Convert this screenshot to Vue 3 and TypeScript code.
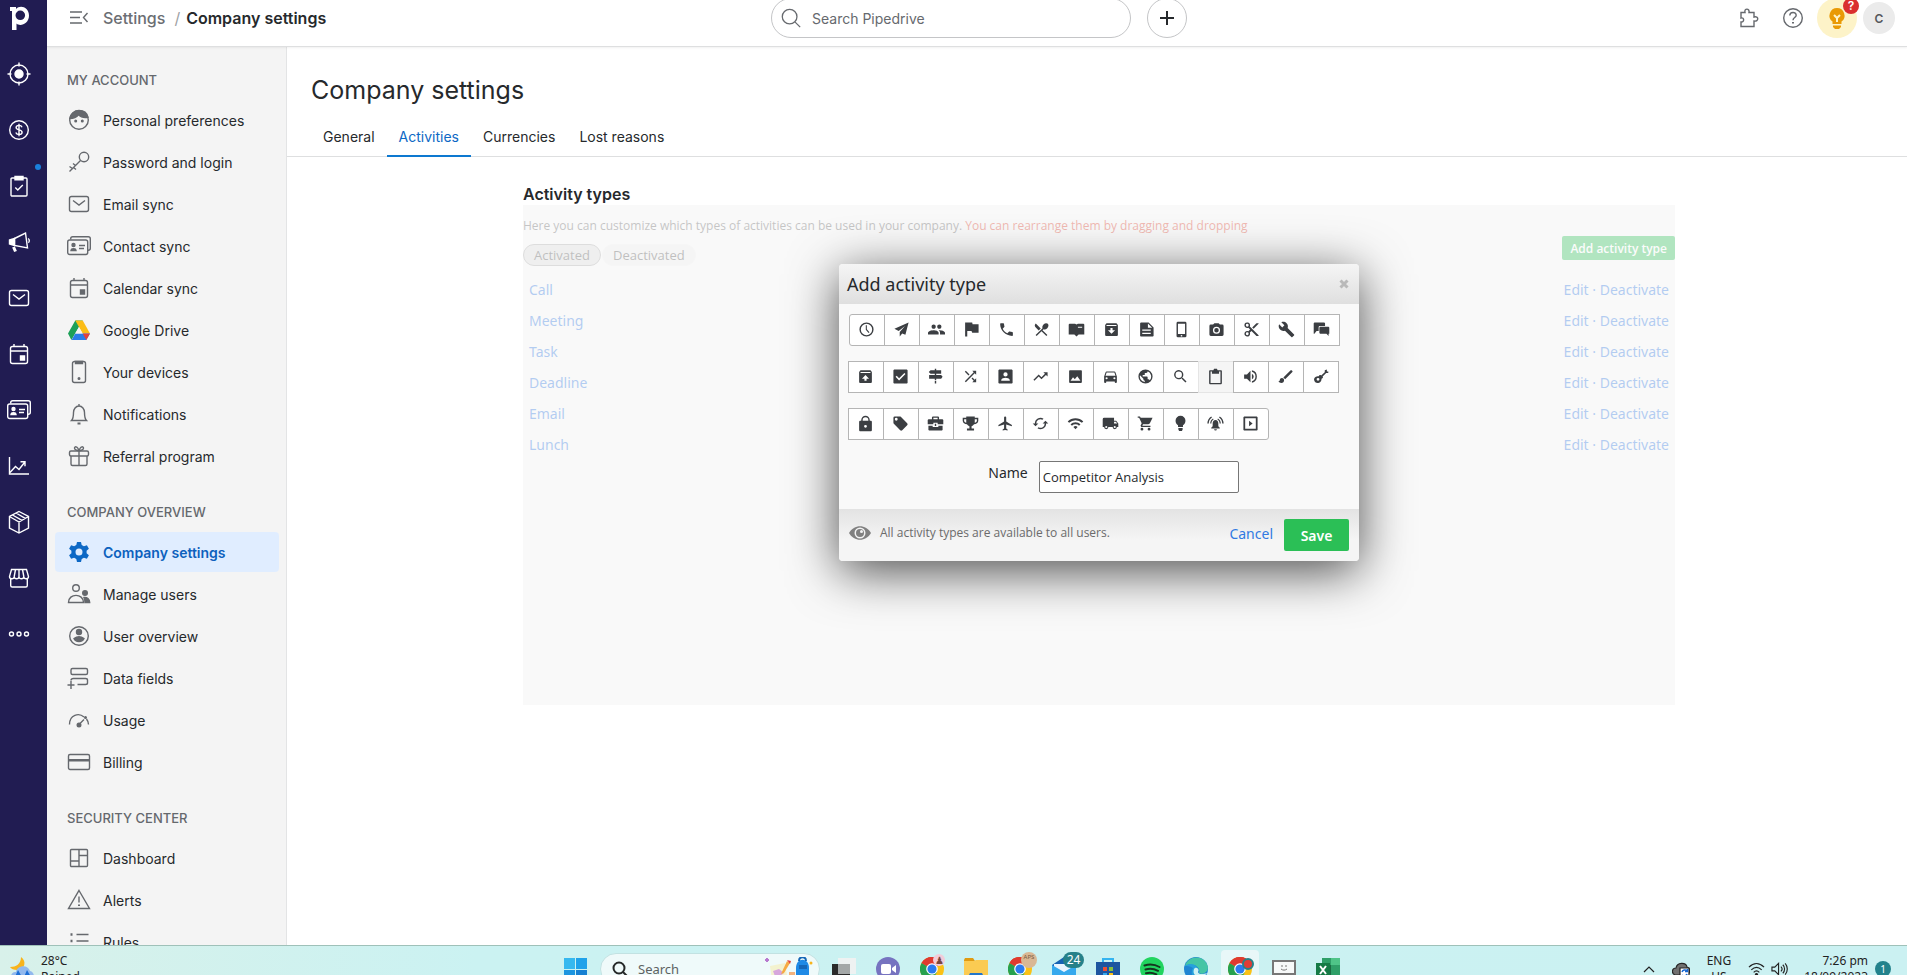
<script setup lang="ts">
import { ref } from 'vue'

interface NavItem { label: string; icon: string; active?: boolean }
interface NavSection { title: string; items: NavItem[] }

const outline: Record<string, string> = {
  target: '<circle cx="12" cy="12" r="9"/><circle cx="12" cy="12" r="4" class="solid"/><path d="M12 .5v4M12 19.500v4M.5 12h4M19.500 12h4"/>',
  dollar: '<circle cx="12" cy="12" r="9.300"/><path d="M15 9.200c-.4-1.200-1.500-1.800-3-1.800s-2.900.7-2.900 2.200c0 3.200 6 1.400 6 4.600 0 1.600-1.500 2.300-3.100 2.300s-2.800-.7-3.200-2M12 5.700v12.600"/>',
  tasks: '<rect x="4" y="4" width="16" height="18" rx="1"/><path d="M8 2.500h8v3.200H8z" class="solid"/><path d="M8.300 13.500l2.500 2.500 5-5"/>',
  megaphone: '<path d="M2.500 10l5-1.500v7l-5-1.500z" class="solid"/><path d="M7.500 8.500L18.500 3l2 15-13-2.500zM21 8.500c1.500.8 1.800 3 .4 4.200" /><path d="M6.500 17l2 4.500" stroke-width="3"/>',
  mail: '<rect x="2.500" y="4.500" width="19" height="15" rx="2"/><path d="M6 8.500l6 4.500 6-4.500"/>',
  calendar: '<rect x="3.500" y="4.500" width="17" height="17" rx="2"/><path d="M3.500 9h17M7 2v3M17 2v3"/><path d="M13.500 14h4v4h-4z" class="solid"/>',
  contacts: '<path d="M3.700 5.500v-.8c0-1.200.8-2 2-2h15.600c1.200 0 2 .8 2 2v9.600c0 1.200-.8 2-2 2h-.5"/><rect x=".7" y="6" width="20" height="14.500" rx="2"/><circle cx="6.500" cy="11" r="1.500" class="solid"/><path d="M4 16.500c.3-2.500 4.700-2.500 5 0z" class="solid"/><path d="M12 11.500h6M12 14.500h5"/>',
  chart: '<path d="M2.500 3v17h19.500M3 18.500l5.500-6 3.500 3 5.500-7M13.500 7.700h4.500v4.500"/>',
  box: '<path d="M12 1.500l9.500 5v11.500L12 23l-9.500-5V6.500zM2.500 6.500L12 12l9.500-5.500M12 12v11M5.500 5l9.500 5.300M9 3l9.300 5.300"/>',
  market: '<path d="M4.500 3.500h15l2 7c0 3-4.700 3-4.700 0 0 3-4.800 3-4.800 0 0 3-4.800 3-4.800 0 0 3-4.700 3-4.700 0zM8.500 3.500l-1.300 7M12 3.500v7M15.500 3.500l1.300 7M3.700 13v6.500c0 1 .8 1.500 1.500 1.500h13.600c.8 0 1.500-.6 1.500-1.500V13"/>',
  dots: '<circle cx="4.500" cy="12" r="2"/><circle cx="12" cy="12" r="2"/><circle cx="19.500" cy="12" r="2"/>',
  face: '<circle cx="12" cy="12" r="9.300"/><path d="M2.800 10.500c3.700 0 6.700-1.200 8.700-3.700 2.500 2.600 5.800 3.200 9.500 2.500C20 5 16.500 2.500 12 2.500S3.500 6 2.800 10.500z" class="solid"/><circle cx="8.700" cy="13" r=".8" class="solid"/><circle cx="15.300" cy="13" r=".8" class="solid"/>',
  key: '<circle cx="17" cy="7" r="4.700"/><path d="M13.500 10.500L2.500 21.500M5.500 18.500l-3-2M8.500 15.500l-2.500-2M6.500 17.500l2.500 2"/>',
  phone: '<rect x="5.500" y="1.500" width="13" height="21" rx="2"/><path d="M8.500 1.500h7v2h-7z" class="solid"/><circle cx="12" cy="18.500" r=".8" class="solid"/>',
  bell: '<path d="M4.500 18.500c1.700-1.700 2-3.500 2-8 0-3.500 2.300-6.500 5.500-6.500s5.500 3 5.500 6.500c0 4.500.3 6.300 2 8zM12 2v2"/><path d="M10.500 21.500h3" stroke-width="2"/>',
  gift: '<rect x="2.500" y="7" width="19" height="5" rx="1.500"/><path d="M4 12v8c0 1 .6 1.500 1.500 1.500h13c.9 0 1.500-.5 1.500-1.500v-8M12 7v14.500M12 7C9.500 6.500 7.500 5.500 7.500 4S10.500 1.500 12 7c1.500-5.500 4.500-4.500 4.500-3S14.500 6.500 12 7"/>',
  users: '<circle cx="9" cy="6" r="3.300"/><path d="M1.500 20.500c0-9.500 15-9.500 15 0z"/><circle cx="18" cy="11" r="2.300" class="solid"/><path d="M17 15.500c3-.5 5.700 1.500 5.700 5H18c0-2-.4-3.700-1-5z" class="solid"/>',
  user: '<circle cx="12" cy="12" r="9.300"/><circle cx="12" cy="8" r="2.500" class="solid"/><path d="M7 14.500c3-2 7-2 10 0-1.500 4-8.500 4-10 0z" class="solid"/>',
  fields: '<rect x="4" y="2.500" width="16.500" height="6" rx="1.500"/><path d="M6.500 12.500h12c1.300 0 2 .6 2 1.500v3c0 1-.7 1.500-2 1.500h-8M6.500 12.500c-1.500 0-2.500.4-2.500 2M4 15v8M.5 19h7"/>',
  gauge: '<path d="M2.500 16.500c0-10 9.500-12 14.500-7.500M19.500 11c1.200 1.500 2 3 2 5.500M12 16.500l5-5"/><circle cx="12" cy="17" r="1.800" class="solid"/><circle cx="18.500" cy="9.500" r=".8" class="solid"/>',
  card: '<rect x="1.500" y="4.500" width="21" height="15" rx="1.500"/><path d="M1.500 9h21v2.500h-21z" class="solid" stroke="none"/>',
  dashboard: '<rect x="3.500" y="3.500" width="17" height="17" rx="1"/><path d="M12 3.500v17M12 9.500h8.500M3.500 15H12"/>',
  alert: '<path d="M12 2.500L22.500 20.500h-21zM12 8.500v6"/><path d="M12 16.500v1.500" stroke-width="2"/>',
  rules: '<path d="M9.500 4.500h12M9.500 11h12M9.500 17.500h12"/><path d="M3.500 4.500h2M3.500 11h2M3.500 17.500h2" stroke-width="2.500"/>',
  puzzle: '<path d="M4 6.500h4c-1.200-4.500 5-4.500 4 0h5v4.500c5-1.500 5 5 0 4v5.500H4v-4.500c3.500.5 3.500-5 0-4z"/>',
  help: '<circle cx="12" cy="12" r="9.300"/><path d="M8.800 9.500c0-4 6.400-4 6.400-.3 0 2.300-3.200 2.300-3.200 5"/><path d="M12 16v1.500" stroke-width="2"/>',
  collapse: '<path d="M3 6h12M3 11.500h10M3 17h12M20.500 7l-4 4.500 4 4.500"/>',
  magnifier: '<circle cx="10.500" cy="10.500" r="8"/><path d="M16.500 16.500l5.500 5.500"/>',
  plus: '<path d="M12 5v14M5 12h14" stroke-width="2"/>',
}

const solid: Record<string, string> = {
  gear: '<path fill-rule="evenodd" d="M10 2h4l.7 3 2.200 1.200 3-1 2 3.500-2.300 2.100v2.400l2.300 2.100-2 3.500-3-1-2.200 1.200-.7 3h-4l-.7-3-2.200-1.200-3 1-2-3.500 2.300-2.100v-2.400L2.100 8.700l2-3.500 3 1L9.300 5zM12 8.500a3.500 3.500 0 100 7 3.500 3.500 0 000-7z"/>',
  drive: '<path d="M8.300 2.500h7.400l-7.600 13-3.700 6.500L1 15.500z" fill="#1da058"/><path d="M8.300 2.500h7.400L23 15.500h-7.400z" fill="#fbbd16"/><path d="M4.600 22l3.700-6.500H23L19.300 22z" fill="#2a7de8"/><path d="M15.700 15.500H23L19.300 22z" fill="#e5423a"/><path d="M12 9l3.700 6.500H8.300z" fill="#f4f4f4"/>',
}

const glyphs: { name: string; d: string }[] = [
  { name: 'Clock', d: 'M12 2a10 10 0 100 20 10 10 0 000-20zm0 18a8 8 0 110-16 8 8 0 010 16zM12.500 6H11v6.500l4 4.500 1.200-1-3.700-4.200z' },
  { name: 'Paper plane', d: 'M22 2L2 11l6 3 9-7-7.500 8.500V22l3.500-4.500 4.500 2z' },
  { name: 'People', d: 'M16 11c1.660 0 2.990-1.340 2.990-3S17.660 5 16 5s-3 1.340-3 3 1.340 3 3 3zm-8 0c1.660 0 2.990-1.340 2.990-3S9.660 5 8 5 5 6.340 5 8s1.340 3 3 3zm0 2c-2.330 0-8 1.170-8 3.500V19h15v-2.500c0-2.330-4.670-3.500-7-3.500zm8 0l-1 .05c1.160.84 2 1.970 2 3.450V19h7v-2.500c0-2.330-5.670-3.500-8-3.500z' },
  { name: 'Flag', d: 'M13.500 4.500L13 2H3v20h3v-8h6l1 2.500h9v-12z' },
  { name: 'Phone', d: 'M6.620 10.790c1.440 2.830 3.760 5.140 6.590 6.590l2.200-2.200c.27-.27.67-.36 1.020-.24 1.120.37 2.330.57 3.570.57.55 0 1 .45 1 1V20c0 .55-.45 1-1 1C10.610 21 3 13.390 3 4c0-.55.45-1 1-1h3.500c.55 0 1 .45 1 1 0 1.250.2 2.450.57 3.570.11.35.03.74-.25 1.020z' },
  { name: 'Restaurant', d: 'M8.100 13.340l2.830-2.830L3.910 3.500a4 4 0 000 5.660zm6.780-1.810c1.530.71 3.680.21 5.270-1.380 1.910-1.910 2.280-4.650.81-6.120-1.460-1.460-4.200-1.100-6.120.81-1.590 1.590-2.090 3.740-1.380 5.270L3.700 19.870l1.410 1.410L12 14.410l6.880 6.880 1.410-1.410L13.410 13z' },
  { name: 'Book', d: 'M2 4h8l2 1 2-1h8l1 1v14h-8l-3 3-3-3H1V5zM14 8v1.500h6V8z' },
  { name: 'Archive', d: 'M20.500 5L19 3H5L3.500 5 3 6v14l1 1h16l1-1V6zM5 5.500h14V7H5zM12 18l-5-5h3.500v-3h3v3H17z' },
  { name: 'Document', d: 'M4 2L3 3v18l1 1h17l1-1V9l-7-7zM14 3.500l6 6h-6zM6 12h12v1.800H6zm0 4.500h12v1.800H6z' },
  { name: 'Smartphone', d: 'M17 1H7a2 2 0 00-2 2v18a2 2 0 002 2h10a2 2 0 002-2V3a2 2 0 00-2-2zm-5 21a1.200 1.200 0 110-2.400 1.200 1.200 0 010 2.400zM17 18.500H7V4h10z' },
  { name: 'Camera', d: 'M9 3L7.200 5H4a2 2 0 00-2 2v12a2 2 0 002 2h16a2 2 0 002-2V7a2 2 0 00-2-2h-3.200L15 3zm3 15a5 5 0 110-10 5 5 0 010 10zm0-8.200a3.200 3.200 0 100 6.400 3.200 3.200 0 000-6.400z' },
  { name: 'Scissors', d: 'M9.640 7.640A4 4 0 106 10c.59 0 1.140-.13 1.640-.36L10 12l-2.360 2.360A4 4 0 1010 18c0-.59-.13-1.140-.36-1.640L12 14l7 7h3v-1zM6 8a2 2 0 110-4 2 2 0 010 4zm0 12a2 2 0 110-4 2 2 0 010 4zM19 3l-6 6 2 2 7-7V3z' },
  { name: 'Wrench', d: 'M22.700 19l-9.100-9.100c.9-2.300.4-5-1.500-6.900-2-2-5-2.400-7.400-1.300L9 6 6 9 1.600 4.700C.4 7.100.9 10.100 2.900 12.100c1.900 1.900 4.600 2.400 6.900 1.500l9.100 9.100c.4.4 1 .4 1.400 0l2.300-2.300c.5-.4.5-1.100.1-1.400z' },
  { name: 'Chat', d: 'M2 2h14l1 1v4H9L8 8v6H5l-3 4H1V3zm8 6h12l1 1v9h-1v3l-3-3h-9l-1-1V9z' },
  { name: 'Unarchive', d: 'M20.500 5L19 3H5L3.500 5 3 6v14l1 1h16l1-1V6zM5 5.500h14V7H5zM12 10l5 5h-3.500v3h-3v-3H7z' },
  { name: 'Checkbox', d: 'M21 2H3L2 3v18l1 1h18l1-1V3zM10 17.500L5 12.500 6.700 11l3.300 3.300L17.500 7 19 8.500z' },
  { name: 'Signpost', d: 'M11 1h2v2h7v5h-7v2h7l2 2.500-2 2.500h-7v2h-2v-2H3v-5h8V8H5L2.500 5.500 5 3h6zM11 18h2v4h-2z' },
  { name: 'Shuffle', d: 'M10.590 9.170L5.410 4 4 5.410l5.170 5.170zM14.500 4l2.040 2.040L4 18.590 5.410 20 17.960 7.460 20 9.500V4zm.33 9.410l-1.410 1.410 3.130 3.130L14.500 20H20v-5.500l-2.040 2.040z' },
  { name: 'Contact', d: 'M2 3v18l1 1h18l1-1V3l-1-1H3zm13 6a3 3 0 11-6 0 3 3 0 016 0zm-9 8c0-2 4-3.100 6-3.100s6 1.100 6 3.100v1H6z' },
  { name: 'Trend', d: 'M16 6l2.290 2.290-4.880 4.880-4-4L2 16.590 3.410 18l6-6 4 4 6.300-6.290L22 12V6z' },
  { name: 'Picture', d: 'M21 19V4l-1-1H4L3 4v16l1 1h16l1-1zM8.500 13l2.500 3 3.500-4.500L19 18H5z' },
  { name: 'Car', d: 'M18.920 6c-.2-.6-.76-1-1.420-1h-11c-.66 0-1.210.42-1.420 1L3 12v8l1 1h1l1-1v-1h12v1l1 1h1l1-1v-8zM6.500 16a1.500 1.500 0 110-3 1.500 1.500 0 010 3zm11 0a1.500 1.500 0 110-3 1.500 1.500 0 010 3zM5 11l1.500-4.500h11L19 11z' },
  { name: 'Globe', d: 'M12 2a10 10 0 100 20 10 10 0 000-20zm-1 17.930A8 8 0 014.210 10.200L9 15v1c0 1.100.9 2 2 2zm6.900-2.540c-.26-.81-1-1.390-1.900-1.390h-1v-3c0-.55-.45-1-1-1H8v-2h2c.55 0 1-.45 1-1V7h2c1.100 0 2-.9 2-2v-.41a8 8 0 012.900 12.800z' },
  { name: 'Search', d: 'M15.500 14h-.79l-.28-.27a6.500 6.500 0 10-.7.7l.27.28v.79l5 4.990L20.490 19zm-6 0a4.500 4.500 0 110-9 4.500 4.500 0 010 9z' },
  { name: 'Clipboard', d: 'M20 3h-5l-1-2h-4L9 3H4L3 4v18l1 1h16l1-1V4zM19 21H5V5h2v3h10V5h2z' },
  { name: 'Sound', d: 'M3 9v6h4l5 5V4L7 9zm13.500 3A4.500 4.500 0 0014 7.970v8.050A4.500 4.500 0 0016.500 12zM14 3.230v2.060a7 7 0 010 13.420v2.060a9 9 0 000-17.540z' },
  { name: 'Brush', d: 'M7 14c-1.660 0-3 1.340-3 3 0 1.310-1.160 2-2 2 .92 1.220 2.490 2 4 2a4 4 0 004-4c0-1.660-1.340-3-3-3zM20.700 3.300c-.4-.4-1-.4-1.400 0L9 13.500l2.500 2.500L21.700 5.700c.4-.4.4-1 0-1.400z' },
  { name: 'Guitar', d: 'M21 2l-3 1v3l-5 4.500c-1.500-1-3-.5-3.500 1-4 0-7 2-6.500 5.500.5 3 3 4.500 6 4 3-.5 4.500-3 4.500-6 2-.5 2.500-1.500 1.500-3L20 7h3V5h-2zM8.500 18a2 2 0 110-4 2 2 0 010 4z' },
  { name: 'Lock', d: 'M19 8h-1V7A6 6 0 006 7v1H4L3 9v13l1 1h16l1-1V9l-1-1zM12 18a2 2 0 110-4 2 2 0 010 4zm4-10H8V7a4 4 0 018 0z' },
  { name: 'Tag', d: 'M21.410 11.580l-9-9C12.050 2.220 11.550 2 11 2H4a2 2 0 00-2 2v7c0 .55.22 1.050.59 1.420l9 9a2 2 0 002.820 0l7-7a2 2 0 000-2.840zM6 8a2 2 0 110-4 2 2 0 010 4z' },
  { name: 'Briefcase', d: 'M8 2L7 3v3H2L1 7v6h8v-2h6v2h8V7l-1-1h-5V3l-1-1zm1 2h6v2H9zm2 8.500h2v3h-2zM2 15h6v2h8v-2h6v6l-1 1H3l-1-1z' },
  { name: 'Trophy', d: 'M6 2h12v2h5v4c0 3-3 4.500-6 5-1 1.500-2 2.500-3.500 3v3H17v3H7v-3h3.500v-3C9 15.500 8 14.500 7 13c-3-.5-6-2-6-5V4h5zM3 6v2c0 1.500 1.500 2.500 3 3V6zm15 5c1.500-.5 3-1.500 3-3V6h-3z' },
  { name: 'Airplane', d: 'M21 16v-2l-8-5V3.500a1.500 1.500 0 00-3 0V9l-8 5v2l8-2.500V19l-2 1.500V22l3.500-1 3.500 1v-1.500L13 19v-5.500z' },
  { name: 'Refresh', d: 'M19 8l-4 4h3a6 6 0 01-8.800 5.300l-1.460 1.460A8 8 0 0020 12h3zM6 12a6 6 0 018.800-5.300l1.460-1.460A8 8 0 004 12H1l4 4 4-4z' },
  { name: 'Wi-Fi', d: 'M1 9l2 2a12.730 12.730 0 0118 0l2-2A15.570 15.570 0 001 9zm8 8l3 3 3-3a4.240 4.240 0 00-6 0zm-4-4l2 2a7.070 7.070 0 0110 0l2-2a9.900 9.900 0 00-14 0z' },
  { name: 'Truck', d: 'M20 8h-3V4H3a2 2 0 00-2 2v11h2a3 3 0 006 0h6a3 3 0 006 0h2v-5zM6 18.500a1.500 1.500 0 110-3 1.500 1.500 0 010 3zm13.500-9L21.500 12H17V9.500zM18 18.500a1.500 1.500 0 110-3 1.500 1.500 0 010 3z' },
  { name: 'Cart', d: 'M7 18a2 2 0 100 4 2 2 0 000-4zm10 0a2 2 0 100 4 2 2 0 000-4zM1 2v2h2l3.600 7.590L5 15l1 2h13v-2H7.500l1-2H16l2-1 4-8H5.200l-1-2z' },
  { name: 'Light bulb', d: 'M12 1a7 7 0 00-7 7c0 3 1.500 5 3.500 6.500V17h7v-2.500C17.500 13 19 11 19 8a7 7 0 00-7-7zM9 18.500h6v2l-1 2h-4l-1-2z' },
  { name: 'Alarm', d: 'M12 7c-2.500 0-4 2-4 5v4l-2 2v1h12v-1l-2-2v-4c0-3-1.500-5-4-5zm-2 13a2 2 0 004 0zM6 2C2.500 4 .5 8 .5 12h2c0-3.500 1.500-6.500 4.500-8.500zM8.500 5C6 6.500 4.500 9 4.500 12h1.700c0-2.500 1-4.500 3.100-5.700zM18 2l-1 1.500c3 2 4.500 5 4.500 8.500h2c0-4-2-8-5.500-10zm-2.500 3l-.8 1.300c2.100 1.200 3.100 3.200 3.100 5.700h1.700c0-3-1.500-5.500-4-7z' },
  { name: 'Play', d: 'M3 2L2 3v18l1 1h18l1-1V3l-1-1zm1.500 2.500h15v15h-15zM10 8v8l5-4z' },
]

const rail = ['target', 'dollar', 'tasks', 'megaphone', 'mail', 'calendar', 'contacts', 'chart', 'box', 'market', 'dots']

const sections: NavSection[] = [
  {
    title: 'MY ACCOUNT',
    items: [
      { label: 'Personal preferences', icon: 'face' },
      { label: 'Password and login', icon: 'key' },
      { label: 'Email sync', icon: 'mail' },
      { label: 'Contact sync', icon: 'contacts' },
      { label: 'Calendar sync', icon: 'calendar' },
      { label: 'Google Drive', icon: 'drive' },
      { label: 'Your devices', icon: 'phone' },
      { label: 'Notifications', icon: 'bell' },
      { label: 'Referral program', icon: 'gift' },
    ],
  },
  {
    title: 'COMPANY OVERVIEW',
    items: [
      { label: 'Company settings', icon: 'gear', active: true },
      { label: 'Manage users', icon: 'users' },
      { label: 'User overview', icon: 'user' },
      { label: 'Data fields', icon: 'fields' },
      { label: 'Usage', icon: 'gauge' },
      { label: 'Billing', icon: 'card' },
    ],
  },
  {
    title: 'SECURITY CENTER',
    items: [
      { label: 'Dashboard', icon: 'dashboard' },
      { label: 'Alerts', icon: 'alert' },
      { label: 'Rules', icon: 'rules' },
    ],
  },
]

const tabs = ['General', 'Activities', 'Currencies', 'Lost reasons']
const types = ['Call', 'Meeting', 'Task', 'Deadline', 'Email', 'Lunch']
const selected = ref('Clipboard')
const typeName = ref('Competitor Analysis')

const chrome = '<circle cx="12" cy="12" r="12" fill="#fbc116"/><path d="M12 12L1.600 6A12 12 0 0122.400 6z" fill="#df3a2f"/><path d="M12 12L1.600 6A12 12 0 0012 24l5-9z" fill="#26a14f"/><path d="M1.600 6A12 12 0 0122.400 6H12l-5 3z" fill="#df3a2f"/><circle cx="12" cy="12" r="5.800" fill="#fff"/><circle cx="12" cy="12" r="4.600" fill="#2b7bf0"/>'
const taskApps: { name: string; art: string; badge?: string; kind?: string; active?: boolean }[] = [
  { name: 'Task view', art: '<path d="M0 7h18v14H0z" fill="#2b2b2b"/><path d="M6 1h18v16H6z" fill="#eef2f2"/><path d="M6 7h12v10H6z" fill="#a4a8a8"/>' },
  { name: 'Chat', art: '<circle cx="12" cy="12" r="12" fill="#7673c0"/><rect x="5" y="7" width="10" height="10" rx="2" fill="#fff"/><path d="M16 11l4-3v8l-4-3z" fill="#fff"/>' },
  { name: 'Chrome', art: chrome, kind: 'pink', badge: '♟' },
  { name: 'File Explorer', art: '<path d="M0 3l1-2h8l2 3H0z" fill="#e09b12"/><path d="M0 4h10l2-1h12v19H0z" fill="#fbcb52"/><path d="M5 18l1-2h12l1 2v5H5z" fill="#2476c8"/>' },
  { name: 'Chrome profile', art: chrome, kind: 'tan', badge: 'APS' },
  { name: 'Mail', art: '<path d="M0 8L12 0l12 8v14H0z" fill="#1763b4"/><path d="M2 7h20v9H2z" fill="#e9f5ff"/><path d="M0 8l12 7 12-7v15H0z" fill="#35a9ed"/>', kind: 'count', badge: '24' },
  { name: 'Store', art: '<path d="M7 6V2h10v4" fill="none" stroke="#35b4f0" stroke-width="2"/><path d="M0 5h24v18H0z" fill="#1d559f"/><path d="M7 10h4v4H7z" fill="#ec4f35"/><path d="M13 10h4v4h-4z" fill="#86bf3b"/><path d="M7 16h4v4H7z" fill="#35a9ed"/><path d="M13 16h4v4h-4z" fill="#fbc116"/>' },
  { name: 'Spotify', art: '<circle cx="12" cy="12" r="12" fill="#21d45f"/><path d="M4.500 8.500c5-1.500 10.500-1 15 1.500M5.500 12.500c4-1.200 8.500-.8 12.500 1.300M6 16.300c3.500-1 7-.6 10.300 1.200" fill="none" stroke="#15351f" stroke-width="2" stroke-linecap="round"/>' },
  { name: 'Edge', art: '<circle cx="12" cy="12" r="12" fill="#1f85d2"/><path d="M1 9C4-2 21-3 24 10c0 6-6 8-9 6 2-6-6-11-14-7z" fill="#45c5a5"/><path d="M1 9C8 4 15 9 14 15c-1 3-2 4 1 7C8 22 6 16 9 11c-3-2-6-2-8-2z" fill="#27a1dc"/><path d="M10 12c2-3 6 0 4 3 0 2 4 3 9 1-3 6-16 5-13-4z" fill="#cdf2f3"/>' },
  { name: 'Chrome window', art: chrome, kind: 'dot', badge: '', active: true },
  { name: 'Remote display', art: '<rect x="1" y="4" width="22" height="13" fill="#f7f9f9" stroke="#777" stroke-width="2"/><path d="M10 8v2M14 8v2M9 12c2 1.500 4 1.500 6 0M12 18v5" fill="none" stroke="#777"/>' },
  { name: 'Excel', art: '<path d="M6 1h18v22H6z" fill="#2f9f68"/><path d="M15 1h9v7h-9z" fill="#4fc488"/><path d="M6 8h9v15H6z" fill="#1b6a42"/><path d="M0 6h14v14H0z" fill="#157a45"/><path d="M4 9l6 8M10 9l-6 8" stroke="#fff" stroke-width="2"/>' },
]
</script>

<template>
  <div class="page">
    <div class="app">
      <nav class="rail" aria-label="Main">
        <a href="#" class="rail-link" aria-label="Home">
          <svg class="logo" viewBox="0 0 24 24"><path fill-rule="evenodd" fill="#fff" d="M3 1h6v2c4-4.500 13-2 13 6.500S13 21 9.500 17.500V24H5V5H3zM13.300 4.500a4.800 4.800 0 100 9.600 4.800 4.800 0 000-9.600z" /></svg>
        </a>
        <a v-for="name in rail" :key="name" href="#" class="rail-link" :aria-label="name">
          <svg class="icon" viewBox="0 0 24 24" v-html="outline[name]"></svg>
          <i v-if="name === 'tasks'" class="rail-dot"></i>
        </a>
      </nav>

      <div class="workspace">
        <header class="topbar">
          <div class="crumbs">
            <button class="plain" aria-label="Collapse menu"><svg class="icon" viewBox="0 0 24 24" v-html="outline.collapse"></svg></button>
            <a href="#">Settings</a><span class="slash">/</span><strong>Company settings</strong>
          </div>
          <div class="top-search">
            <label class="search-box">
              <svg class="icon" viewBox="0 0 24 24" v-html="outline.magnifier"></svg>
              <input type="text" placeholder="Search Pipedrive" aria-label="Search Pipedrive" />
            </label>
            <button class="add-round" aria-label="Quick add"><svg class="icon" viewBox="0 0 24 24" v-html="outline.plus"></svg></button>
          </div>
          <div class="top-actions">
            <button class="plain" aria-label="Marketplace"><svg class="icon" viewBox="0 0 24 24" v-html="outline.puzzle"></svg></button>
            <button class="plain" aria-label="Help"><svg class="icon" viewBox="0 0 24 24" v-html="outline.help"></svg></button>
            <button class="tips" aria-label="Tips">
              <svg class="icon-24" viewBox="0 0 24 24"><path d="M12 2a7.500 7.500 0 00-4.500 13.500V18h9v-2.500A7.500 7.500 0 0012 2zM8 19.500h8v1.500l-2 2h-4l-2-2z" fill="#e99a05" /><path d="M9 9l3 3 3-3M12 12v4" fill="none" stroke="#fdf3c8" stroke-width="2" /></svg>
              <span class="tips-badge">?</span>
            </button>
            <button class="avatar">C</button>
          </div>
        </header>

        <div class="below">
          <aside class="sidebar">
            <section v-for="s in sections" :key="s.title">
              <h2>{{ s.title }}</h2>
              <a v-for="item in s.items" :key="item.label" href="#" class="nav-item" :class="{ active: item.active }">
                <svg v-if="solid[item.icon]" class="solid-icon" viewBox="0 0 24 24" v-html="solid[item.icon]"></svg>
                <svg v-else class="icon" viewBox="0 0 24 24" v-html="outline[item.icon]"></svg>
                <span>{{ item.label }}</span>
              </a>
            </section>
          </aside>

          <main class="main">
            <h1>Company settings</h1>
            <nav class="tabs" aria-label="Company settings sections">
              <a v-for="t in tabs" :key="t" href="#" :class="{ current: t === 'Activities' }">{{ t }}</a>
            </nav>

            <div class="content">
              <h3>Activity types</h3>
              <div class="panel">
                <p class="intro">Here you can customize which types of activities can be used in your company. <em>You can rearrange them by dragging and dropping</em></p>
                <div class="controls">
                  <div class="pills"><button class="pill on">Activated</button><button class="pill">Deactivated</button></div>
                  <button class="add-type">Add activity type</button>
                </div>
                <ul class="types">
                  <li v-for="t in types" :key="t">
                    <a href="#">{{ t }}</a>
                    <span><a href="#">Edit</a> · <a href="#">Deactivate</a></span>
                  </li>
                </ul>

                <div class="overlay">
                  <form class="dialog" role="dialog" aria-labelledby="dialog-title" @submit.prevent>
                    <div class="dialog-head">
                      <h4 id="dialog-title">Add activity type</h4>
                      <button type="button" class="close" aria-label="Close"><svg viewBox="0 0 10 10"><path d="M1.500 1.500l7 7M8.500 1.500l-7 7" stroke="#b9b9b9" stroke-width="3" /></svg></button>
                    </div>
                    <div class="dialog-body">
                      <div class="glyphs">
                        <button v-for="g in glyphs" :key="g.name" type="button" class="glyph" :class="{ picked: selected === g.name }" :aria-label="g.name" :aria-pressed="selected === g.name" @click="selected = g.name">
                          <svg viewBox="0 0 24 24"><path fill-rule="evenodd" :d="g.d" /></svg>
                        </button>
                      </div>
                      <div class="field">
                        <label for="type-name">Name</label>
                        <input id="type-name" v-model="typeName" type="text" />
                      </div>
                    </div>
                    <div class="dialog-foot">
                      <svg class="eye" viewBox="0 0 22 14"><path d="M0 7C5-2 17-2 22 7c-5 9-17 9-22 0z" fill="#808080" /><circle cx="11" cy="7" r="5.500" fill="#f3f3f3" /><circle cx="11" cy="7" r="4" fill="#808080" /><circle cx="12.500" cy="5.500" r="1.500" fill="#f3f3f3" /></svg>
                      <span class="note">All activity types are available to all users.</span>
                      <a href="#" class="cancel">Cancel</a>
                      <button type="submit" class="save">Save</button>
                    </div>
                  </form>
                </div>
              </div>
            </div>
          </main>
        </div>
      </div>
    </div>

    <footer class="taskbar">
      <div class="task-inner">
        <div class="weather">
          <svg viewBox="0 0 24 24"><path d="M11 0c6 4 4 13-4 13-3 0-6-1-7-3 6 0 11-3 11-10z" fill="#f8b41c" /><path d="M4 24c-5-3-3-10 2-9 1-7 12-8 14-1 5 1 5 8 1 10z" fill="#91b9ee" /><path d="M8 13l4 7-3 4-4-4zM17 13l4 7-3 4-4-4z" fill="#1c6fd6" /></svg>
          <div>28°C<br />Rained</div>
        </div>
        <div class="dock">
          <button class="task" aria-label="Start"><svg viewBox="0 0 24 24"><path d="M0 1h11v11H0z" fill="#35b8ef" /><path d="M12 1h11v11H12z" fill="#1fa2ea" /><path d="M0 13h11v11H0z" fill="#1b95e0" /><path d="M12 13h11v11H12z" fill="#1580d2" /></svg></button>
          <label class="task-search">
            <svg viewBox="0 0 16 16"><circle cx="7" cy="7" r="5.500" /><path d="M11 11l4 4" /></svg>
            <input type="text" placeholder="Search" aria-label="Search Windows" />
            <svg class="doodle" viewBox="0 0 48 24"><path d="M5 9l15-3 3 18H7z" fill="#f3f2cf" /><path d="M8 14l6-2 5 4-8 6z" fill="#d7a6dc" /><path d="M22 4l3 2-6 10-3 1z" fill="#f6ab43" /><path d="M22 3l4 1-1 3z" fill="#e1453b" /><path d="M0 3h4M2 1v4" stroke="#b879cf" stroke-width="2" /><path d="M31 24V11c0-11 13-11 13 0v13z" fill="#1f8ae6" /><path d="M34 8h8v4h-8z" fill="#1667b7" /><path d="M34 4c0-5 7-5 7 0" fill="none" stroke="#1667b7" /><path d="M24 15h6v9h-6z" fill="#f2b27d" /><circle cx="46" cy="6" r="1.500" fill="#f8b41c" /></svg>
          </label>
          <button v-for="a in taskApps" :key="a.name" class="task" :class="{ 'is-active': a.active }" :aria-label="a.name">
            <svg viewBox="0 0 24 24" v-html="a.art"></svg>
            <span v-if="a.kind" class="badge" :class="a.kind">{{ a.badge }}</span>
          </button>
        </div>
        <div class="tray">
          <svg class="chev" viewBox="0 0 12 8"><path d="M1 7l5-5 5 5" /></svg>
          <svg class="cloud" viewBox="0 0 18 16"><path d="M3 14C-1 12 0 7 4 7c1-6 10-6 11-1 4 1 3 7 0 8z" fill="#707070" stroke="#262626" /><path d="M8 7h9v9H8z" fill="#fff" /><path d="M10 11a3 3 0 015-1M15.500 8v2.500H13M15 13a3 3 0 01-5 1" fill="none" stroke="#1667d2" stroke-width="1.500" /></svg>
          <div class="lang">ENG<br />US</div>
          <svg class="line" viewBox="0 0 18 16"><path d="M1 6c5-5 11-5 16 0M3.500 9c3.500-3.500 7.500-3.500 11 0M6 11.500c2-2 4-2 6 0" /><circle cx="9" cy="14" r="1.200" fill="#222" /></svg>
          <svg class="line" viewBox="0 0 18 16"><path d="M1 6h3l4-4v12l-4-4H1zM10.500 5.500c1.500 1.500 1.500 3.500 0 5M12.500 3.500c2.500 2.500 2.500 6.500 0 9M15 2c3 3.500 3 8.500 0 12" /></svg>
          <div class="clock">7:26 pm<br />18/09/2023</div>
          <span class="alerts">1</span>
        </div>
      </div>
    </footer>
  </div>
</template>

<style>
html,
body {
  margin: 0;
  background: #fff;
}
</style>

<style scoped>
.page {
  display: flex;
  flex-direction: column;
  height: 100vh;
  overflow: hidden;
  font-family: Inter, "Liberation Sans", sans-serif;
  font-size: 14px;
  color: #26292c;
}
* { box-sizing: border-box; }
a { color: inherit; text-decoration: none; }
button, input { font: inherit; color: inherit; margin: 0; }
button { padding: 0; border: 0; background: none; cursor: pointer; }
h1, h2, h3, h4, p, ul { margin: 0; padding: 0; }
.app { flex: 1; min-height: 0; display: flex; overflow: hidden; }

.icon {
  width: 24px;
  height: 24px;
  flex: none;
  fill: none;
  stroke: currentColor;
  stroke-width: 1.4;
  overflow: visible;
}
.icon :deep(.solid) { fill: currentColor; }
.icon-24 { width: 24px; height: 24px; }

.rail {
  flex: none;
  width: 47px;
  margin-top: -10px;
  padding-right: 9px;
  background: #211c52;
  color: #fff;
}
.rail-link { position: relative; display: flex; height: 56px; align-items: center; justify-content: center; }
.logo { width: 24px; height: 24px; }
.rail-dot { position: absolute; right: -3px; top: 6px; width: 6px; height: 6px; border-radius: 3px; background: #1a80dc; }

.workspace { flex: 1; min-width: 0; display: flex; flex-direction: column; }
.topbar {
  flex: none;
  display: grid;
  grid-template-columns: 1fr auto 1fr;
  align-items: center;
  height: 57px;
  margin-top: -10px;
  padding: 0 12px 0 20px;
  border-bottom: 1px solid #dedfe0;
  box-shadow: 0 1px 2px rgba(0, 0, 0, 0.06);
  z-index: 1;
}
.crumbs { display: flex; align-items: center; font-size: 16px; font-weight: 500; color: #6b6e73; }
.crumbs .plain { margin-right: 12px; }
.crumbs strong { font-weight: 600; color: #26292c; }
.slash { margin: 0 6px 0 9px; font-weight: 400; color: #a0a2a5; }
.plain { display: flex; color: #66696e; }
.top-search { display: flex; gap: 16px; margin-right: 4px; }
.search-box {
  display: flex;
  align-items: center;
  gap: 8px;
  width: 360px;
  height: 40px;
  padding: 0 8px;
  border: 1px solid #c4c5c7;
  border-radius: 20px;
  color: #66696e;
}
.search-box .icon { width: 22px; height: 22px; }
.search-box input { flex: 1; min-width: 0; border: 0; outline: 0; background: none; }
.search-box input::placeholder { color: #66696e; opacity: 1; }
.add-round { display: flex; width: 40px; height: 40px; align-items: center; justify-content: center; border: 1px solid #c4c5c7; border-radius: 20px; }
.top-actions { display: flex; align-items: center; justify-content: flex-end; }
.top-actions .plain { margin-right: 20px; }
.top-actions .plain + .plain { margin-right: 12px; }
.tips { position: relative; display: flex; width: 40px; height: 40px; align-items: center; justify-content: center; border-radius: 20px; background: #fdf3c8; }
.tips-badge { position: absolute; right: -2px; top: 0; width: 16px; height: 16px; border-radius: 8px; background: #da2f2f; color: #fff; font-size: 12px; line-height: 16px; font-weight: 600; }
.avatar { width: 32px; height: 32px; margin-left: 6px; border-radius: 16px; background: #ebebeb; color: #55585c; font-size: 12px; font-weight: 600; }

.below { flex: 1; min-height: 0; display: flex; overflow: hidden; }
.sidebar { flex: none; width: 240px; padding: 25px 7px 0 8px; border-right: 1px solid #e3e4e5; background: #f4f4f4; }
.sidebar section { display: flex; flex-direction: column; gap: 2px; margin-bottom: 28px; }
.sidebar h2 { padding: 0 12px 10px; font-size: 13px; line-height: 16px; font-weight: 500; color: #65686d; }
.nav-item { display: flex; align-items: center; gap: 12px; height: 40px; padding: 0 12px; border-radius: 4px; }
.nav-item .icon { color: #65686d; }
.solid-icon { width: 24px; height: 24px; fill: #0d68c5; }
.nav-item.active { background: #e0edff; color: #0d61bd; font-weight: 600; }

.main { flex: 1; min-width: 0; }
.main h1 { padding: 27px 24px 0; font-size: 25px; line-height: 32px; font-weight: 400; }
.tabs { display: flex; padding: 14px 24px 0; border-bottom: 1px solid #dedfe0; }
.tabs a { height: 37px; padding: 7px 12px 0; line-height: 20px; border-bottom: 2px solid transparent; margin-bottom: -1px; }
.tabs .current { color: #0d68c5; border-color: #0d78d0; }

.content { width: 72%; max-width: 1156px; margin: 0 auto; padding: 26px 0 0 4px; }
.content h3 { font-size: 16px; line-height: 22px; font-weight: 600; }
.panel {
  position: relative;
  min-height: 500px;
  background: #f9f9f9;
  font-family: "Noto Sans", "Open Sans", sans-serif;
}
.intro { padding-top: 11px; font-family: "Open Sans", "Noto Sans", sans-serif; font-size: 12px; line-height: 20px; color: #666; }
.intro em { font-style: normal; color: #e0442e; }
.controls { display: flex; justify-content: space-between; align-items: flex-start; font-family: "Open Sans", "Noto Sans", sans-serif; }
.pills { display: flex; gap: 1px; margin-top: 8px; }
.pill { height: 22px; padding: 0 10px; border: 1px solid #f0f0f0; border-radius: 11px; background: #ededed; font-size: 13px; color: #555; line-height: 18px; }
.pill.on { border-color: #aaa; background: #ddd; }
.add-type { height: 24px; padding: 0 8px; border-radius: 2px; background: #2bbf56; color: #fff; font-size: 12px; font-weight: 600; }
.types { padding: 8px 6px 0; list-style: none; font-size: 14px; line-height: 31px; color: #317ae2; }
.types li { display: flex; justify-content: space-between; }

.overlay {
  position: absolute;
  inset: 0;
  display: flex;
  justify-content: center;
  align-items: flex-start;
  padding-top: 59px;
  background: rgba(249, 249, 249, 0.65);
}
.dialog { width: 520px; border-radius: 4px; background: #f9f9f9; box-shadow: 0 10px 50px rgba(0, 0, 0, 0.7); }
.dialog-head { display: flex; align-items: center; justify-content: space-between; height: 40px; padding: 0 10px 0 8px; border-radius: 4px 4px 0 0; background: linear-gradient(#f5f5f5, #dfdfdf); }
.dialog-head h4 { font-size: 18px; font-weight: 400; }
.close { display: flex; }
.close svg { width: 10px; height: 10px; }
.dialog-body { padding: 10px 10px 16px; }
.glyphs { display: flex; flex-wrap: wrap; row-gap: 15px; }
.glyph { display: flex; justify-content: center; align-items: center; width: 36px; height: 32px; margin-left: -1px; padding: 0 1px 2px 0; border: 1px solid #b5b5b5; background: #fff; }
.glyph:first-child { margin-left: 0; border-radius: 3px 0 0 3px; }
.glyph:last-child { border-radius: 0 3px 3px 0; }
.glyph.picked { border-color: #e5e5e5 #b5b5b5 #e5e5e5 #e5e5e5; background: #f5f5f5; }
.glyph svg { width: 17px; height: 17px; fill: #3b3e42; }
.field { display: flex; justify-content: center; gap: 11px; margin-top: 21px; padding-left: 29px; }
.field label { font-size: 14px; line-height: 24px; }
.field input { width: 200px; height: 32px; padding: 0 3px; border: 1px solid #767676; border-radius: 2px; outline: 0; background: #fff; font-family: "Open Sans", "Noto Sans", sans-serif; font-size: 13px; }
.dialog-foot { display: flex; align-items: center; height: 52px; padding: 0 10px; border-radius: 0 0 4px 4px; background: linear-gradient(#e3e3e3, #f5f5f5 60%); }
.eye { width: 22px; height: 14px; margin-bottom: 4px; }
.note { flex: 1; margin-left: 9px; padding-bottom: 4px; font-family: "Open Sans", "Noto Sans", sans-serif; font-size: 12px; line-height: 18px; color: #6b6b6b; }
.cancel { margin-right: 11px; padding-bottom: 4px; font-size: 14px; color: #317ae2; }
.save { width: 65px; height: 32px; border-radius: 2px; background: #2bbf56; color: #fff; font-weight: 600; }

.taskbar { flex: none; height: 30px; overflow: hidden; border-top: 1px solid #9fc1b9; background: linear-gradient(90deg, #d8f1ea, #cbf2f2 25%, #cbf1f2); font-family: "Noto Sans", "Open Sans", sans-serif; font-size: 12px; line-height: 16px; color: #1f2222; }
.task-inner { display: grid; grid-template-columns: 1fr auto 1fr; align-items: center; height: 46px; }
.weather { display: flex; gap: 7px; padding-left: 10px; align-items: center; }
.weather svg { width: 24px; height: 24px; }
.dock { display: flex; align-items: center; margin-right: 3px; }
.task { position: relative; display: flex; width: 44px; height: 46px; align-items: center; justify-content: center; }
.task > svg { width: 24px; height: 24px; }
.is-active { width: 38px; height: 38px; margin: 0 3px; border-radius: 4px; background: #e8f7f8; }
.task-search { display: flex; align-items: center; gap: 10px; width: 220px; height: 32px; margin: 0 2px; padding: 0 6px 0 11px; border: 1px solid #c2e2e2; border-radius: 16px; background: #effafa; }
.task-search svg { width: 16px; height: 16px; fill: none; stroke: #252828; stroke-width: 2; }
.task-search input { flex: 1; min-width: 0; padding: 0; border: 0; outline: 0; background: none; font-size: 13px; }
.task-search input::placeholder { color: #5d6262; opacity: 1; }
.task-search svg.doodle { width: 48px; height: 24px; stroke: none; }
.badge { position: absolute; left: 23px; top: 6px; width: 16px; height: 16px; border-radius: 8px; text-align: center; font-size: 10px; line-height: 16px; }
.badge.pink { width: 12px; height: 12px; top: 8px; line-height: 12px; background: #f2ccd8; color: #7b473d; }
.badge.tan { background: #d9b794; color: #765a3f; font-size: 6px; line-height: 11px; }
.badge.count { left: 21px; width: 21px; background: #268189; color: #fff; font-size: 12px; }
.badge.dot { left: 21px; top: 8px; width: 12px; height: 12px; border: 2px solid #268189; background: #e03c36; }
.tray { display: flex; align-items: center; justify-content: flex-end; padding-right: 16px; }
.tray svg { fill: none; stroke: #222; stroke-width: 1.2; }
.chev { width: 12px; height: 8px; margin-right: 17px; }
.cloud { width: 18px; height: 16px; margin-right: 17px; stroke-width: 1; }
.lang { margin-right: 17px; text-align: center; }
.line { width: 17px; height: 16px; margin-right: 6px; }
.clock { margin: 0 7px 0 10px; text-align: right; }
.alerts { width: 16px; height: 16px; border-radius: 8px; background: #23828c; color: #fff; font-size: 10px; text-align: center; }
</style>
